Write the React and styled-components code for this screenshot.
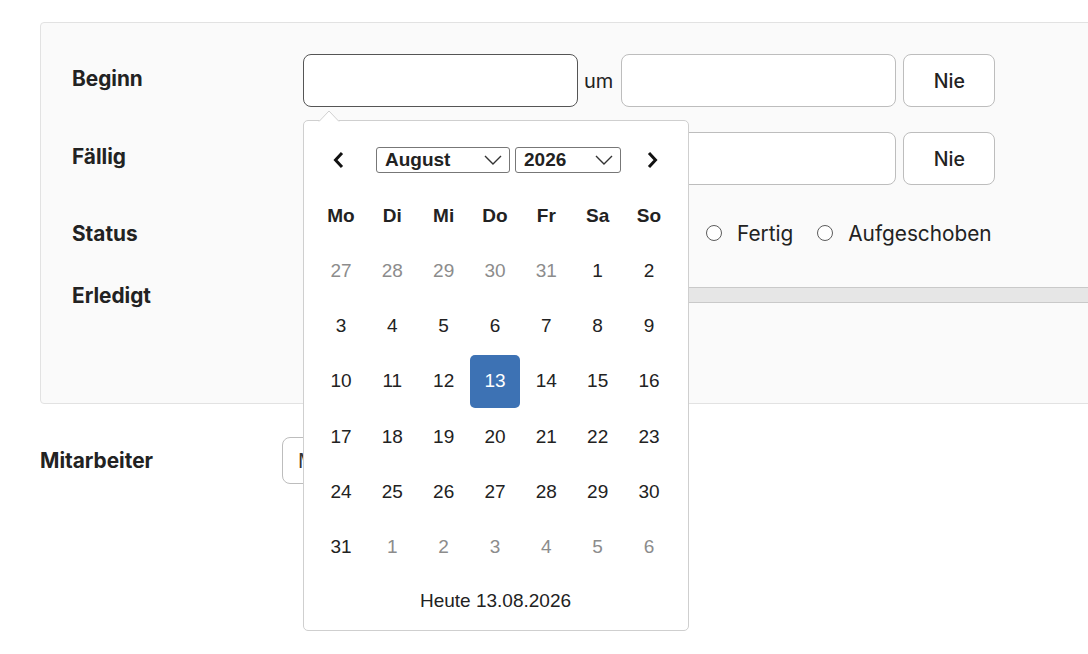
import React from "react"
import styled, { createGlobalStyle } from "styled-components"

const GlobalStyle = createGlobalStyle`
  html, body {
    margin: 0;
    background: #ffffff;
    overflow: hidden;
  }
  body {
    font-family: Inter, "Noto Sans", sans-serif;
    color: #222;
  }
`

const Page = styled.div`
  width: 1088px;
  height: 654px;
  padding: 22px 0 0 40px;
  box-sizing: border-box;
  overflow: hidden;
`

const Panel = styled.section`
  width: 1100px;
  box-sizing: border-box;
  background: #fafafa;
  border: 1px solid #e2e2e2;
  border-radius: 4px;
  padding: 31px 0 94px 31px;
  display: flex;
  flex-direction: column;
  gap: 25px;
`

const Row = styled.div`
  display: grid;
  grid-template-columns: ${({ $labelWidth }) => $labelWidth || 231}px 1fr;
  align-items: center;
  height: ${({ $h }) => $h}px;
`

const Label = styled.div`
  font-weight: 700;
  font-size: 20.8px;
  color: #222;
  margin-top: ${({ $offset }) => $offset || 0}px;
`

const Field = styled.div`
  display: flex;
  align-items: center;
  height: 100%;
  gap: 8px;
`

const Anchor = styled.div`
  position: relative;
  height: 100%;
`

const TextInput = styled.div`
  box-sizing: border-box;
  width: ${({ $w }) => $w}px;
  height: ${({ $h }) => $h || 53}px;
  background: #fff;
  border: 1px solid ${({ $focused }) => ($focused ? "#555" : "#bdbdbd")};
  border-radius: 8px;
  padding: 0 15px;
  display: flex;
  align-items: center;
  font-size: 20px;
  color: #333;
  overflow: hidden;
  white-space: nowrap;
`

const Um = styled.span`
  font-size: 20px;
  color: #222;
  margin: 0 0 0 -2px;
`

const NieButton = styled.button`
  box-sizing: border-box;
  width: 92px;
  height: 53px;
  margin-left: -1px;
  background: #fff;
  border: 1px solid #bdbdbd;
  border-radius: 8px;
  font-family: Inter, "Noto Sans", sans-serif;
  font-size: 19.5px;
  font-weight: 500;
  color: #222;
`

const Radios = styled.div`
  display: flex;
  align-items: center;
  gap: 24px;
  font-size: 20.8px;
`

const Radio = styled.label`
  display: flex;
  align-items: center;
  gap: 15px;
  color: #222;
`

const Circle = styled.span`
  box-sizing: border-box;
  width: 16px;
  height: 16px;
  border-radius: 50%;
  border: 1.3px solid #5c5c5c;
  background: #fff;
`

const Progress = styled.div`
  height: 16px;
  background: #e6e6e6;
  border-top: 1px solid #c9c9c9;
  border-bottom: 1px solid #c9c9c9;
  box-sizing: border-box;
`

const OuterRow = styled(Row)`
  margin-top: 33px;
`

/* date picker popup */

const Popup = styled.div`
  position: absolute;
  top: 66px;
  left: 0;
  z-index: 10;
  width: 386px;
  height: 511px;
  box-sizing: border-box;
  background: #fff;
  border: 1px solid #cfcfcf;
  border-radius: 5px;
  padding: 0 13px 0 12px;
  font-family: "Liberation Sans", Arial, sans-serif;
  color: #222;
`

const Triangle = styled.svg`
  position: absolute;
  top: -12px;
  left: 14px;
`

const Header = styled.div`
  display: flex;
  align-items: center;
  height: 26px;
  margin-top: 26px;
`

const NavButton = styled.span`
  display: flex;
  justify-content: center;
  width: 50px;
  margin: ${({ $shift }) => $shift || "0"};
`

const Select = styled.div`
  box-sizing: border-box;
  width: ${({ $w }) => $w}px;
  height: 26px;
  border: 1px solid #777;
  border-radius: 3px;
  display: flex;
  align-items: center;
  justify-content: space-between;
  padding: 0 7px 0 8px;
  margin-right: 5px;
  font-size: 19px;
  font-weight: 700;
  color: #222;
  &:last-of-type {
    margin-right: 0;
  }
`

const Grid = styled.div`
  display: grid;
  grid-template-columns: repeat(7, 50px);
  column-gap: 1.33px;
  row-gap: 2.4px;
`

const WeekGrid = styled(Grid)`
  margin-top: 28px;
  margin-bottom: 13px;
`

const WeekDay = styled.div`
  height: 30px;
  display: flex;
  align-items: center;
  justify-content: center;
  font-weight: 700;
  font-size: 19px;
`

const Day = styled.div`
  height: 53px;
  display: flex;
  align-items: center;
  justify-content: center;
  font-size: 19px;
  border-radius: 5px;
  color: ${({ $outside, $selected }) => ($selected ? "#fff" : $outside ? "#8c8c8c" : "#222")};
  background: ${({ $selected }) => ($selected ? "#3d72b4" : "transparent")};
`

const Today = styled.div`
  margin-top: 14px;
  text-align: center;
  font-size: 19px;
  line-height: 26px;
  color: #222;
`

const Chevron = ({ dir }) => (
  <svg width="14" height="18" viewBox="0 0 14 18">
    <polyline
      points={dir === "left" ? "10,2 3.5,9 10,16" : "4,2 10.5,9 4,16"}
      fill="none"
      stroke="#111"
      strokeWidth="3"
    />
  </svg>
)

const SelectArrow = () => (
  <svg width="18" height="10" viewBox="0 0 18 10">
    <polyline points="1,1 9,9 17,1" fill="none" stroke="#333" strokeWidth="1.4" />
  </svg>
)

const weekDays = ["Mo", "Di", "Mi", "Do", "Fr", "Sa", "So"]

const buildDays = () => {
  const days = []
  for (let d = 27; d <= 31; d++) days.push({ n: d, outside: true })
  for (let d = 1; d <= 31; d++) days.push({ n: d, selected: d === 13 })
  for (let d = 1; d <= 6; d++) days.push({ n: d, outside: true })
  return days
}

const DatePicker = () => (
  <Popup>
    <Triangle width="22" height="13" viewBox="0 0 22 13">
      <polygon points="0,13 11,2 22,13" fill="#fff" />
      <polyline points="1,12.5 11,2 21,12.5" fill="none" stroke="#cfcfcf" strokeWidth="1" />
    </Triangle>
    <Header>
      <NavButton $shift="0 0 0 -2px">
        <Chevron dir="left" />
      </NavButton>
      <span style={{ width: 12 }} />
      <Select $w={134}>
        August
        <SelectArrow />
      </Select>
      <Select $w={106}>
        2026
        <SelectArrow />
      </Select>
      <span style={{ flex: 1 }} />
      <NavButton $shift="0 -2px 0 0">
        <Chevron dir="right" />
      </NavButton>
    </Header>
    <WeekGrid>
      {weekDays.map(w => (
        <WeekDay key={w}>{w}</WeekDay>
      ))}
    </WeekGrid>
    <Grid>
      {buildDays().map((d, i) => (
        <Day key={i} $outside={d.outside} $selected={d.selected}>
          {d.n}
        </Day>
      ))}
    </Grid>
    <Today>Heute 13.08.2026</Today>
  </Popup>
)

const statusOptions = ["Neu", "Offen", "In Bearbeitung", "Fertig", "Aufgeschoben"]

const App = () => (
  <>
    <GlobalStyle />
    <Page>
      <Panel>
        <Row $h={53}>
          <Label $offset={-4}>Beginn</Label>
          <Field>
            <Anchor>
              <TextInput $w={275} $focused />
              <DatePicker />
            </Anchor>
            <Um>um</Um>
            <TextInput $w={275} />
            <NieButton>Nie</NieButton>
          </Field>
        </Row>
        <Row $h={53}>
          <Label $offset={-4}>Fällig</Label>
          <Field>
            <TextInput $w={275} />
            <Um>um</Um>
            <TextInput $w={275} />
            <NieButton>Nie</NieButton>
          </Field>
        </Row>
        <Row $h={46}>
          <Label>Status</Label>
          <Radios>
            {statusOptions.map(o => (
              <Radio key={o}>
                <Circle />
                {o}
              </Radio>
            ))}
          </Radios>
        </Row>
        <Row $h={28}>
          <Label>Erledigt</Label>
          <Progress />
        </Row>
      </Panel>
      <OuterRow $labelWidth={242} $h={47}>
        <Label>Mitarbeiter</Label>
        <TextInput $w={300} $h={47}>
          Max Mustermann
        </TextInput>
      </OuterRow>
    </Page>
  </>
)

export default App
